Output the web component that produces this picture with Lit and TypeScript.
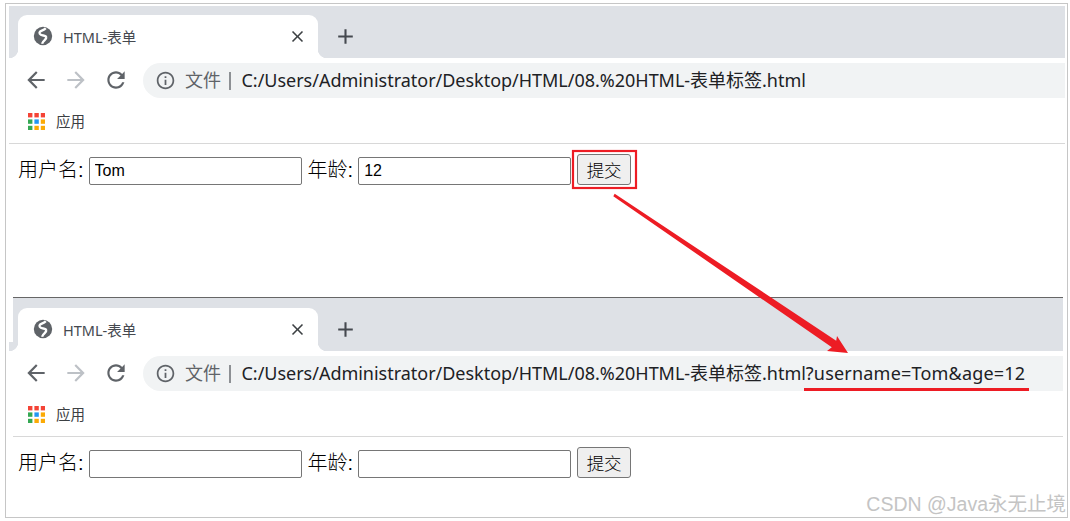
import { LitElement, html, css, svg } from "lit";
import { customElement } from "lit/decorators.js";

const PATHS = {
  close: "M19 6.41 17.59 5 12 10.59 6.41 5 5 6.41 10.59 12 5 17.59 6.41 19 12 13.41 17.59 19 19 17.59 13.41 12z",
  plus: "M19 13h-6v6h-2v-6H5v-2h6V5h2v6h6v2z",
  back: "M20 11H7.83l5.59-5.59L12 4l-8 8 8 8 1.41-1.41L7.83 13H20v-2z",
  forward: "M12 4l-1.41 1.41L16.17 11H4v2h12.17l-5.58 5.59L12 20l8-8z",
  reload: "M17.65 6.35C16.2 4.9 14.21 4 12 4c-4.42 0-7.99 3.58-7.99 8s3.57 8 7.99 8c3.73 0 6.84-2.55 7.73-6h-2.08c-.82 2.33-3.04 4-5.65 4-3.31 0-6-2.69-6-6s2.69-6 6-6c1.66 0 3.14.69 4.22 1.78L13 11h7V4l-2.35 2.35z",
  info: "M11 7h2v2h-2zm0 4h2v6h-2zm1-9C6.48 2 2 6.48 2 12s4.48 10 10 10 10-4.48 10-10S17.52 2 12 2zm0 18c-4.41 0-8-3.59-8-8s3.59-8 8-8 8 3.59 8 8-3.59 8-8 8z",
};

const icon = (d: string, cls: string) =>
  html`<svg class="icon ${cls}" viewBox="0 0 24 24"><path d=${d}></path></svg>`;

const globeIcon = svg`<svg class="icon globe" viewBox="0 0 24 24">
  <circle cx="12" cy="12" r="10" fill="#5f6368"></circle>
  <path d="M15 3.5C12 7 7 6 8.5 9.5 10 12.5 15 10.5 15.5 13.5 16 16 12 16.5 11 20.5" fill="none" stroke="#fff" stroke-width="2.6"></path>
</svg>`;

const GRID = ["#f44336", "#f44336", "#f44336", "#34a853", "#2196f3", "#fbaa05", "#34a853", "#fbaa05", "#fbaa05"];

const appsIcon = svg`<svg class="apps" viewBox="0 0 17 17">${GRID.map(
  (c, i) => svg`<rect x=${(i % 3) * 6.4} y=${Math.floor(i / 3) * 6.4} width="4.4" height="4.4" fill=${c}></rect>`
)}</svg>`;

@customElement("app-root")
export class AppRoot extends LitElement {
  static styles = css`
    :host { display: block; width: 1070px; height: 521px; position: relative; overflow: hidden; background: #fff;
      font-family: "Noto Sans", "Noto Sans CJK SC", sans-serif; }
    .frame { box-sizing: border-box; width: 1063px; height: 515px; margin: 3px 0 0 5px; border: 1px solid #c6c6c6;
      padding-top: 2px; display: flex; flex-direction: column; }
    .panel { display: flex; flex-direction: column; flex: none; }
    .one { height: 291px; margin: 0 2px 0 3px; }
    .two { margin: 0 4px 0 7px; border-top: 1px solid #666; }
    .strip { background: #dee1e6; display: flex; align-items: flex-end; height: 52px; padding-left: 9px; }
    .two .strip { height: 53px; padding-left: 5px; }
    .tab { position: relative; box-sizing: border-box; width: 300px; height: 43px; background: #fff; border-radius: 9px 9px 0 0;
      display: flex; align-items: center; padding: 0 0 0 15px; margin-right: 15px; }
    .tab::before, .tab::after { content: ""; position: absolute; bottom: 0; width: 9px; height: 9px; }
    .tab::before { left: -9px; background: radial-gradient(circle at 0 0, #dee1e6 9px, #fff 9.5px); }
    .tab::after { right: -9px; background: radial-gradient(circle at 100% 0, #dee1e6 9px, #fff 9.5px); }
    .icon { display: block; flex: none; }
    .globe { width: 22px; height: 22px; margin-top: -1px; margin-left: -1px; }
    .title { font-size: 14.5px; color: #45494f; margin-left: 9px; flex: 1; white-space: nowrap; }
    .close { width: 19px; height: 19px; fill: #3c4043; margin-right: 11px; }
    .plus { width: 25px; height: 25px; fill: #45494f; margin-bottom: 9px; }
    .toolbar { height: 42px; display: flex; align-items: flex-start; padding-top: 5px; box-sizing: border-box; padding-left: 14px; }
    .two .toolbar { padding-left: 10px; }
    .nav { width: 26px; height: 26px; margin: 4px 14px 0 0; fill: #5f6368; }
    .nav.fwd { fill: #bdc1c6; }
    .omni { flex: 1; height: 35px; background: #f1f3f4; border-radius: 18px 0 0 18px; display: flex; align-items: center;
      padding-left: 12px; white-space: nowrap; }
    .info { width: 21px; height: 21px; fill: #5f6368; }
    .scheme { font-size: 18px; color: #5f6368; margin: 0 0 4px 9px; }
    .sep { width: 1.5px; height: 18px; background: #8d9094; margin: 0 11px 0 8px; }
    .url { font-size: 18px; color: #202124; margin-bottom: 4px; letter-spacing: -0.02px; }
    .query { letter-spacing: 0.2px; }
    .bookmarks { height: 43px; display: flex; align-items: center; padding-left: 19px; border-bottom: 1px solid #d8d8d8; }
    .two .bookmarks { padding-left: 15px; }
    .apps { width: 17px; height: 17px; display: block; flex: none; }
    .bm { font-size: 14.5px; color: #3c4043; margin: 0 0 2px 11px; }
    .form { display: flex; align-items: flex-end; height: 31px; padding: 10px 0 0 9px; font-family: "Liberation Sans", "Noto Sans CJK SC", sans-serif; }
    .two .form { padding-left: 5px; }
    .label { font-size: 20px; font-weight: 300; color: #000; height: 31px; line-height: 33px; white-space: nowrap; }
    .field { box-sizing: border-box; height: 28px; width: 213px; border: 1px solid #767676; border-radius: 2px; padding: 0 5px; margin: 0 6px 0 5px;
      font: 16px "Liberation Sans", sans-serif; color: #000; background: #fff; outline: none; }
    .submit { box-sizing: border-box; width: 54px; height: 31px; padding: 0; background: #efefef; border: 1px solid #767676; border-radius: 3px;
      font: 300 17.5px "Noto Sans CJK SC", sans-serif; color: #000; }
    .overlay { position: absolute; left: 0; top: 0; width: 1070px; height: 521px; pointer-events: none; }
    .mark { position: absolute; right: 4px; bottom: 4px; font: 19.5px "Liberation Sans", "Noto Sans CJK SC", sans-serif; color: #c4c4c4; white-space: nowrap; }
  `;

  private browser(cls: string, query: string, user: string, age: string) {
    return html`
      <section class="panel ${cls}">
        <div class="strip">
          <div class="tab">
            ${globeIcon}
            <span class="title">HTML-表单</span>
            ${icon(PATHS.close, "close")}
          </div>
          ${icon(PATHS.plus, "plus")}
        </div>
        <div class="toolbar">
          ${icon(PATHS.back, "nav")}
          ${icon(PATHS.forward, "nav fwd")}
          ${icon(PATHS.reload, "nav")}
          <div class="omni">
            ${icon(PATHS.info, "info")}
            <span class="scheme">文件</span>
            <span class="sep"></span>
            <span class="url">C:/Users/Administrator/Desktop/HTML/08.%20HTML-表单标签.html<span class="query">${query}</span></span>
          </div>
        </div>
        <div class="bookmarks">${appsIcon}<span class="bm">应用</span></div>
        <form class="form">
          <span class="label">用户名:</span>
          <input class="field" .value=${user} />
          <span class="label">年龄:</span>
          <input class="field" .value=${age} />
          <button type="button" class="submit">提交</button>
        </form>
      </section>
    `;
  }

  render() {
    return html`
      <div class="frame">
        ${this.browser("one", "", "Tom", "12")}
        ${this.browser("two", "?username=Tom&age=12", "", "")}
      </div>
      <svg class="overlay" viewBox="0 0 1070 521">
        <rect x="573" y="151" width="63" height="37" fill="none" stroke="#ed1c24" stroke-width="2.2"></rect>
        <polygon points="614.7,193.8 836.2,340.7 837,336 848,353 827,351 831.8,347.3 613.3,196.2" fill="#ed1c24"></polygon>
        <rect x="804" y="388" width="225" height="3" fill="#ed1c24"></rect>
      </svg>
      <div class="mark">CSDN @Java永无止境</div>
    `;
  }
}
